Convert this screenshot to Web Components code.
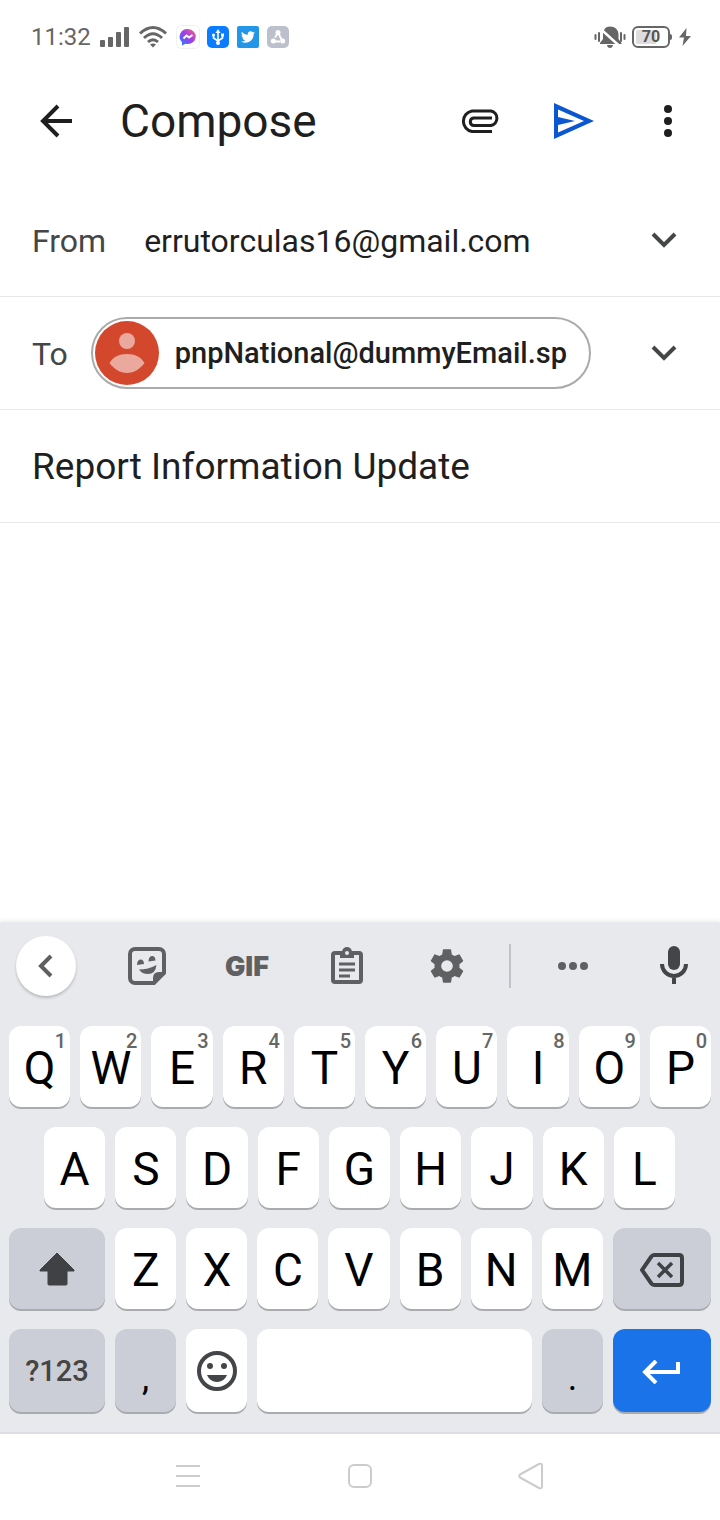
<!DOCTYPE html>
<html lang="en">
<head>
<meta charset="utf-8">
<meta name="viewport" content="width=device-width, initial-scale=1">
<title>Compose</title>
<style>
  html, body { margin: 0; background: #fff; }
  body { font-family: Roboto, "Noto Sans", sans-serif; color: #1f1f1f; }
</style>
</head>
<body>
<compose-screen></compose-screen>

<script>
const reset = `
  *, *::before { box-sizing: border-box; }
  button, input, textarea, select { font: inherit; color: inherit; border: 0; background: none; padding: 0; margin: 0; outline: 0; border-radius: 0; appearance: none; }
  svg { display: block; flex: none; }
`;

function define(name, css, html) {
  customElements.define(name, class extends HTMLElement {
    constructor() {
      super();
      this.attachShadow({ mode: 'open' }).innerHTML = `<style>${reset}${css}</style>${html}`;
    }
  });
}

/* Status bar */
define('status-bar', `
  :host { display: flex; align-items: center; justify-content: space-between; height: 73px; padding: 0 28px 0 31px; color: #666; font-size: 24px; line-height: 32px; }
  div { display: flex; align-items: center; }
  .left { gap: 9px; }
  .right { gap: 6px; }
  .apps { display: flex; gap: 6px; }
  .cell { justify-content: center; width: 38px; height: 22px; border: 2px solid #666; border-radius: 6px; font-size: 16px; line-height: 16px; font-weight: 700; color: #555; background: linear-gradient(90deg, #ddd 68%, #fff 68%) content-box; padding: 2px; }
  .nub { width: 2px; height: 6px; background: #666; border-radius: 0 2px 2px 0; }
`, `
  <div class="left">
    <span>11:32</span>
    <svg width="30" height="22" viewBox="0 0 30 22" fill="#666"><rect y="14" width="5" height="7" rx="1"/><rect x="8" y="11" width="5" height="10" rx="1"/><rect x="16" y="6" width="5" height="15" rx="1"/><rect x="24" y="1" width="5" height="20" rx="1"/></svg>
    <svg width="28" height="24" viewBox="0 0 28 24" fill="none" stroke="#666" stroke-width="3"><path d="M1 8.500Q14-3.500 27 8.500M5 13Q14 4.500 23 13M9 17Q14 12.500 19 17"/><path d="M14 22.500l-3-3q3-2 6 0z" fill="#666" stroke="none"/></svg>
    <div class="apps">
      <svg width="24" height="24" viewBox="0 0 24 24"><defs><linearGradient id="m" x1="0" y1="1" x2="1" y2="0"><stop offset="0" stop-color="#1689ff"/><stop offset=".5" stop-color="#9a3df0"/><stop offset="1" stop-color="#ff6470"/></linearGradient></defs><rect x=".5" y=".5" width="23" height="23" rx="5" fill="#fff" stroke="#f0f0f0"/><path d="M12 4a8 7.500 0 1 1-2.500 14.700L6 20.500v-3.300A7.700 7.700 0 0 1 12 4z" fill="url(#m)"/><path d="M7.500 13.500l3-3 2.500 2 3.500-2.500" fill="none" stroke="#fff" stroke-width="2"/></svg>
      <svg width="24" height="24" viewBox="0 0 24 24"><rect x="1" y="1" width="22" height="22" rx="5" fill="#0a7cff"/><path d="M12 6v13M7.500 10v3l4.500 3 4.500-3v-3" fill="none" stroke="#fff" stroke-width="1.600"/><path d="M12 4l2.500 4h-5z" fill="#fff"/><circle cx="12" cy="18" r="2" fill="#fff"/><circle cx="7.500" cy="10" r="1.500" fill="#fff"/><rect x="15" y="8.500" width="3" height="3" fill="#fff"/></svg>
      <svg width="24" height="24" viewBox="0 0 24 24"><rect x="1" y="1" width="22" height="22" rx="2" fill="#2396e8"/><path d="M19 7.500c-.5.300-1 .4-1.600.5.600-.4 1-.9 1.200-1.500-.6.300-1.200.6-1.800.7a2.900 2.900 0 0 0-5 2.600C9.400 9.700 7.300 8.600 5.900 6.800c-.8 1.300-.4 3 .9 3.900-.5 0-.9-.1-1.300-.4 0 1.400 1 2.500 2.300 2.900-.4.100-.9.100-1.300 0 .4 1.200 1.500 2 2.700 2-1.200 1-2.700 1.400-4.200 1.200 5.800 3.700 13-.5 12.600-7.400.6-.4 1-.9 1.400-1.500z" fill="#fff"/></svg>
      <svg width="24" height="24" viewBox="0 0 24 24"><rect x="1" y="1" width="22" height="22" rx="5" fill="#bcc0cc"/><path d="M12 7.500l-3 5M12 7.500l4 8M7 16.500h7" fill="none" stroke="#fff" stroke-width="1.800"/><g fill="#fff"><circle cx="12" cy="7.500" r="2.500"/><circle cx="7.300" cy="16" r="2.500"/><circle cx="16.700" cy="16" r="2.500"/></g></svg>
    </div>
  </div>
  <div class="right">
    <svg width="32" height="24" viewBox="0 0 32 24"><path d="M16 1.500c5 0 8.500 3.500 8.500 8V14l3 4v1H6v-1l3-4V9.500c0-4.500 2.500-8 7-8zM13 20h6q-.5 3-3 3t-3-3z" fill="#666"/><path d="M5 2.500l21 19" stroke="#fff" stroke-width="2.400"/><path d="M1.500 10v4M5 8v8M27 8v8M30.500 10v4" stroke="#666" stroke-width="2" stroke-linecap="round"/></svg>
    <div class="battery"><div class="cell">70</div><div class="nub"></div></div>
    <svg width="14" height="18" viewBox="0 0 14 18"><path d="M8.500 0L1 9.500h5L4.500 18 13 8H8z" fill="#666"/></svg>
  </div>
`);

/* App bar */
define('app-bar', `
  :host { display: flex; align-items: center; height: 95px; padding: 0 16px; }
  h1 { flex: 1; margin: 0 0 0 24px; font-size: 46px; line-height: 56px; font-weight: 400; }
  button { display: grid; place-items: center; width: 80px; height: 80px; }
  .actions { display: flex; gap: 14px; margin-right: -4px; }
`, `
  <button aria-label="Back"><svg width="40" height="40" viewBox="0 0 40 40" fill="none" stroke="#1f1f1f" stroke-width="4"><path d="M36 20H7M22 5L7 20l15 15"/></svg></button>
  <h1>Compose</h1>
  <div class="actions">
    <button aria-label="Attach file"><svg width="40" height="24" viewBox="0 0 40 24" fill="none" stroke="#1f1f1f" stroke-width="3"><path d="M32 22.500H12a10.400 10.400 0 0 1 0-20.500H31a7.400 7.400 0 0 1 0 14.500H13.500a3.800 3.800 0 0 1 0-7.500H32"/></svg></button>
    <button aria-label="Send"><svg width="40" height="36" viewBox="0 0 40 36" fill="#0b57d0"><path fill-rule="evenodd" d="M0 0l40 18L0 36zM4 6.500V14l17 4-17 4v7.500L30 18z"/></svg></button>
    <button aria-label="More options"><svg width="8" height="32" viewBox="0 0 8 32" fill="#1f1f1f"><circle cx="4" cy="4" r="4"/><circle cx="4" cy="16" r="4"/><circle cx="4" cy="28" r="4"/></svg></button>
  </div>
`);

/* One line of the message header */
define('field-row', `
  :host { display: flex; align-items: center; height: 113px; padding: 0 16px 0 32px; border-bottom: 1px solid #e8e8e8; font-size: 32px; line-height: 40px; }
`, `<slot></slot>`);

define('expand-icon', `:host { display: block; }`,
  `<svg width="26" height="16" viewBox="0 0 26 16" fill="none" stroke="#444746" stroke-width="4"><path d="M2 2l11 11L24 2"/></svg>`);

define('recipient-chip', `
  :host { display: block; }
  button { display: flex; align-items: center; gap: 16px; height: 72px; padding: 0 22px 0 2px; border: 2px solid #aaa; border-radius: 36px; font-size: 29px; line-height: 40px; font-weight: 500; }
`, `
  <button>
    <svg width="64" height="64" viewBox="0 0 64 64"><circle cx="32" cy="32" r="32" fill="#d3472c"/><g fill="#eba99e"><circle cx="32" cy="20" r="8"/><path d="M14.500 42C18 36 24 33 32 33s14 3 17.500 9C45 48 39 52 32 52s-13-4-17.500-10z"/></g></svg>
    <span><slot></slot></span>
  </button>
`);

define('message-form', `
  :host { display: flex; flex-direction: column; flex: 1; padding-top: 16px; }
  label { color: #444746; padding-top: 2px; }
  select { flex: 1; min-width: 0; margin-left: 38px; height: 48px; padding-top: 2px; }
  recipient-chip { margin-left: 23px; }
  .expand { display: grid; place-items: center; width: 48px; height: 48px; margin: 0 16px 0 auto; }
  .from { margin-right: 27px; pointer-events: none; }
  .subject { flex: 1; min-width: 0; font-size: 37px; height: 56px; }
  textarea { flex: 1; width: 100%; padding: 24px 32px; resize: none; font-size: 32px; line-height: 40px; }
`, `
  <field-row><label for="from">From</label><select id="from"><option>errutorculas16@gmail.com</option></select><expand-icon class="from"></expand-icon></field-row>
  <field-row><label id="to">To</label><recipient-chip aria-labelledby="to">pnpNational@dummyEmail.sp</recipient-chip><button class="expand" aria-label="Show Cc and Bcc"><expand-icon></expand-icon></button></field-row>
  <field-row><input class="subject" aria-label="Subject" value="Report Information Update"></field-row>
  <textarea aria-label="Message"></textarea>
`);

/* Keyboard */
define('key-cap', `
  :host { display: block; flex: 61 1 0; min-width: 0; }
  :host([size=start]) { flex-grow: 96; }
  :host([size=end]) { flex-grow: 98; }
  :host([size=space]) { flex-grow: 275; }
  button { position: relative; display: grid; place-items: center; width: 100%; height: 100%; padding-top: 2px; border-radius: 12px; background: #fff; box-shadow: 0 2px 0 #a9abae; color: #000; font-size: 46px; line-height: 54px; }
  :host([tone=grey]) button { background: #cbced6; }
  :host([tone=blue]) button { background: #1a73e8; }
  :host([kind=icon]) button { padding-top: 0; }
  :host([kind=mode]) button { padding-top: 0; font-size: 29px; font-weight: 500; color: #444; }
  :host([kind=mark]) button { font-size: 36px; padding-top: 14px; }
  small { position: absolute; top: 3px; right: 4px; font-size: 20px; line-height: 24px; font-weight: 500; color: #666; }
  small:empty { display: none; }
`, `<button><slot></slot><small></small></button>`);

define('key-toolbar', `
  :host { display: grid; grid-template-columns: 97fr 100fr 100fr 100fr 100fr 26fr 100fr 97fr; align-items: center; justify-items: center; height: 88px; }
  button { display: grid; place-items: center; width: 60px; height: 60px; color: #5f6062; }
  .collapse { justify-self: start; margin-left: 16px; border-radius: 50%; background: #fff; box-shadow: 0 2px 3px #0003; }
  .gif { padding-top: 2px; font: 900 27px/32px Inter, sans-serif; }
  .line { width: 2px; height: 44px; background: #c1c3c8; }
  .mic { margin-left: 4px; }
`, `
  <button class="collapse" aria-label="Collapse toolbar"><svg width="16" height="24" viewBox="0 0 16 24" fill="none" stroke="#5f6062" stroke-width="4"><path d="M13 2L3 12l10 10"/></svg></button>
  <button aria-label="Stickers"><svg width="38" height="38" viewBox="0 0 38 38"><path d="M7 2h24a5 5 0 0 1 5 5v19L26 36H7a5 5 0 0 1-5-5V7a5 5 0 0 1 5-5z" fill="none" stroke="#5f6062" stroke-width="4"/><path d="M25 37V31q0-6 6-6h6zM9 18c0-7 7-7 7-1zM20.500 14.500c0-7 7-7 7-1zM11 22.500q9 0 17.500-4.500-1 9-8.500 9-6 0-9-4.500z" fill="#5f6062"/></svg></button>
  <button class="gif">GIF</button>
  <button aria-label="Clipboard"><svg width="34" height="38" viewBox="0 0 34 38" fill="none" stroke="#5f6062"><rect x="3" y="6" width="28" height="29" rx="2" stroke-width="4"/><path d="M10 5h14v6H10z" fill="#5f6062" stroke="none"/><circle cx="17" cy="5" r="5" fill="#5f6062" stroke="none"/><circle cx="17" cy="6" r="2" fill="#e8e9ed" stroke="none"/><path d="M9 17h16M9 23h16M9 29h11" stroke-width="3"/></svg></button>
  <button aria-label="Settings"><svg width="40" height="40" viewBox="0 0 24 24"><path fill="#5f6062" d="M19.430 12.980c.04-.32.07-.64.07-.98s-.03-.66-.07-.98l2.110-1.650c.19-.15.240-.42.120-.64l-2-3.460c-.12-.22-.39-.3-.61-.22l-2.490 1c-.52-.4-1.080-.73-1.690-.98l-.38-2.650C14.460 2.180 14.250 2 14 2h-4c-.25 0-.46.18-.49.420l-.38 2.650c-.61.250-1.170.590-1.690.980l-2.490-1c-.23-.09-.49 0-.61.220l-2 3.460c-.13.220-.07.490.12.640l2.110 1.650c-.04.320-.07.650-.07.980s.03.660.07.980l-2.110 1.650c-.19.150-.24.420-.12.640l2 3.460c.12.220.39.300.61.220l2.490-1c.52.400 1.080.730 1.690.980l.38 2.650c.03.240.24.420.49.420h4c.25 0 .46-.18.49-.42l.38-2.650c.61-.25 1.170-.59 1.690-.98l2.490 1c.23.090.49 0 .61-.22l2-3.460c.12-.22.07-.49-.12-.64zM12 15.500a3.500 3.500 0 1 1 0-7 3.500 3.500 0 0 1 0 7z"/></svg></button>
  <div class="line"></div>
  <button aria-label="More"><svg width="30" height="8" viewBox="0 0 30 8" fill="#5f6062"><circle cx="4" cy="4" r="4"/><circle cx="15" cy="4" r="4"/><circle cx="26" cy="4" r="4"/></svg></button>
  <button class="mic" aria-label="Voice typing"><svg width="28" height="40" viewBox="0 0 28 40"><rect x="8" width="12" height="24" rx="6" fill="#444548"/><path d="M2 18a12 12 0 0 0 24 0M14 30v8" fill="none" stroke="#444548" stroke-width="4"/></svg></button>
`);

const digits = '1234567890';
const letters = row => [...row].map(c => `<key-cap>${c}</key-cap>`).join('');

define('soft-keyboard', `
  :host { display: block; background: #e8e9ed; border-bottom: 2px solid #dedfe3; box-shadow: 0 -2px 4px #0000000f; }
  .keys { display: grid; gap: 20px; grid-template-rows: 81px 81px 81px 83px; padding: 16px 9px 20px; }
  .row { display: flex; gap: 10px; }
  .inset { padding: 0 36px 0 35px; }
`, `
  <key-toolbar></key-toolbar>
  <div class="keys">
    <div class="row top">${letters('QWERTYUIOP')}</div>
    <div class="row inset">${letters('ASDFGHJKL')}</div>
    <div class="row">
      <key-cap size="start" tone="grey" kind="icon"><svg role="img" aria-label="Shift" width="36" height="34" viewBox="0 0 36 34"><path d="M18 1L35 18v1h-7v13q0 1-1 1H10q-1 0-1-1V19H1v-1z" fill="#404144" stroke="#404144" stroke-linejoin="round"/></svg></key-cap>
      ${letters('ZXCVBNM')}
      <key-cap size="end" tone="grey"><svg role="img" aria-label="Backspace" width="44" height="34" viewBox="0 0 44 34" fill="none" stroke="#404144" stroke-width="4"><path d="M14 2h25q3 0 3 3v24q0 3-3 3H14q-1.500 0-3-2L2 17l9-13q1.500-2 3-2z"/><path d="M18 10l14 14M32 10L18 24" stroke-width="3.500"/></svg></key-cap>
    </div>
    <div class="row">
      <key-cap size="start" tone="grey" kind="mode">?123</key-cap>
      <key-cap tone="grey" kind="mark">,</key-cap>
      <key-cap kind="icon"><svg role="img" aria-label="Emoji" width="40" height="40" viewBox="0 0 40 40"><circle cx="20" cy="20" r="18" fill="none" stroke="#444548" stroke-width="4"/><g fill="#444548"><circle cx="13" cy="15" r="3"/><circle cx="27" cy="15" r="3"/><path d="M10 24h20q-3 7-10 7t-10-7z"/></g></svg></key-cap>
      <key-cap size="space"></key-cap>
      <key-cap tone="grey" kind="mark">.</key-cap>
      <key-cap size="end" tone="blue"><svg role="img" aria-label="Enter" width="40" height="24" viewBox="0 0 40 24" fill="none" stroke="#fff" stroke-width="4"><path d="M36 2v10H4M14 1L3 12l11 11"/></svg></key-cap>
    </div>
  </div>
`);

/* System navigation */
define('nav-bar', `
  :host { display: grid; grid-template-columns: repeat(3, 172fr); justify-items: center; align-items: center; height: 86px; padding: 0 102px 2px; box-sizing: border-box; }
  button { display: grid; place-items: center; width: 64px; height: 64px; }
`, `
  <button aria-label="Recent apps"><svg width="24" height="24" viewBox="0 0 24 24" stroke="#ccc" stroke-width="2"><path d="M0 2h24M0 12h24M0 22h24"/></svg></button>
  <button aria-label="Home"><svg width="24" height="24" viewBox="0 0 24 24" fill="none" stroke="#ccc" stroke-width="2"><rect x="1" y="1" width="22" height="22" rx="5"/></svg></button>
  <button aria-label="Back"><svg width="28" height="28" viewBox="0 0 28 28" fill="none" stroke="#ccc" stroke-width="2" stroke-linejoin="round"><path d="M2 12.500L21 2q3-1 3 1.500v21q0 2.500-3 1.500L2 15.500q-1.500-1.500 0-3z"/></svg></button>
`);

define('compose-screen', `
  :host { display: flex; flex-direction: column; min-height: 100vh; }
`, `
  <status-bar></status-bar>
  <app-bar></app-bar>
  <message-form></message-form>
  <soft-keyboard></soft-keyboard>
  <nav-bar></nav-bar>
`);

/* The top row of letters carries its long-press digit in the corner */
const keyboard = document.querySelector('compose-screen').shadowRoot.querySelector('soft-keyboard');
keyboard.shadowRoot.querySelectorAll('.top key-cap').forEach((key, i) => {
  key.shadowRoot.querySelector('small').textContent = digits[i];
});
</script>
</body>
</html>
